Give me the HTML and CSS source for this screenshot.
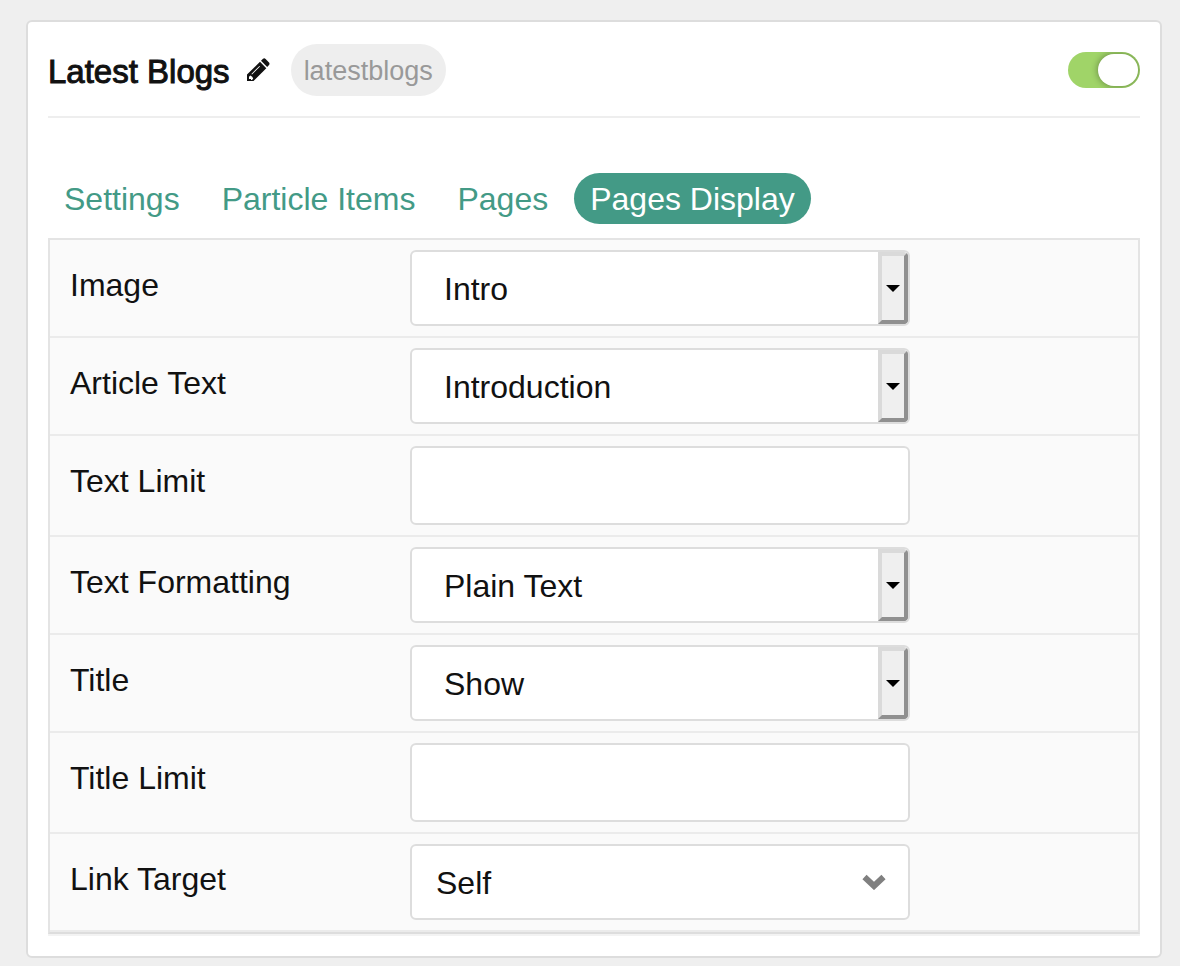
FILE: index.html
```html
<!DOCTYPE html>
<html lang="en">
<head>
<meta charset="utf-8">
<meta name="viewport" content="width=device-width, initial-scale=1">
<title>Latest Blogs</title>
<link rel="stylesheet" href="styles.css">
</head>
<body>
<main class="card">
  <header class="card-header">
    <h1 class="card-title">Latest Blogs</h1>
    <button class="edit" type="button" aria-label="Edit title">
      <svg viewBox="0 0 24 24" width="24" height="24" aria-hidden="true">
        <path fill="#111" fill-rule="evenodd" d="M1 23V16.500L14 3.800 20.300 10.200 7.500 23ZM3 18.800V21H5V22H6L7.200 20.400 6.200 18.800 4.400 17.500ZM6 16.500 14 8.600 13.400 8 5.400 15.900Z"/>
        <path fill="#111" d="M15 2.800 17 .8Q18.300-.2 19.600.9L23 4.400Q24 5.600 23 6.900L21.200 9Z"/>
      </svg>
    </button>
    <span class="badge">latestblogs</span>
    <input class="toggle" type="checkbox" role="switch" aria-label="Enable Latest Blogs" checked>
  </header>

  <nav class="tabs" aria-label="Particle sections">
    <a class="tab" href="#settings">Settings</a>
    <a class="tab" href="#items">Particle Items</a>
    <a class="tab" href="#pages">Pages</a>
    <a class="tab tab-active" href="#display" aria-current="page">Pages Display</a>
  </nav>

  <form class="fields" id="display">
    <div class="row">
      <label class="label" for="image">Image</label>
      <div class="control">
        <select class="select" id="image"><option>Intro</option><option>Full</option><option>None</option></select>
        <span class="stepper" aria-hidden="true"></span>
      </div>
    </div>
    <div class="row">
      <label class="label" for="article">Article Text</label>
      <div class="control">
        <select class="select" id="article"><option>Introduction</option><option>Full Article</option><option>Hide</option></select>
        <span class="stepper" aria-hidden="true"></span>
      </div>
    </div>
    <div class="row">
      <label class="label" for="text-limit">Text Limit</label>
      <input class="control input" id="text-limit" type="text">
    </div>
    <div class="row">
      <label class="label" for="formatting">Text Formatting</label>
      <div class="control">
        <select class="select" id="formatting"><option>Plain Text</option><option>HTML</option></select>
        <span class="stepper" aria-hidden="true"></span>
      </div>
    </div>
    <div class="row">
      <label class="label" for="title">Title</label>
      <div class="control">
        <select class="select" id="title"><option>Show</option><option>Hide</option></select>
        <span class="stepper" aria-hidden="true"></span>
      </div>
    </div>
    <div class="row">
      <label class="label" for="title-limit">Title Limit</label>
      <input class="control input" id="title-limit" type="text">
    </div>
    <div class="row">
      <label class="label" for="target">Link Target</label>
      <div class="control">
        <select class="select select-plain" id="target"><option>Self</option><option>New Window</option></select>
        <svg class="chevron" viewBox="0 0 24 16" width="24" height="16" aria-hidden="true">
          <path d="M2.500 3 12 12 21.500 3" fill="none" stroke="#808080" stroke-width="6"/>
        </svg>
      </div>
    </div>
  </form>
</main>
</body>
</html>
```
FILE: styles.css
```css
* { box-sizing: border-box; }

body {
  margin: 0;
  padding: 20px 18px 7px 26px;
  background: #efefef;
  color: #111;
  font-family: "Liberation Sans", Arial, sans-serif;
  font-size: 32px;
}

.card {
  padding: 22px 20px;
  background: #fff;
  border: 2px solid #ddd;
  border-radius: 6px;
}

.card-header {
  display: flex;
  align-items: center;
  padding-bottom: 20px;
  border-bottom: 2px solid #eee;
}

.card-title {
  margin: 0;
  padding-top: 3px;
  font-size: 33px;
  line-height: 40px;
  font-weight: 400;
  -webkit-text-stroke: 1px currentColor;
}

.edit {
  display: flex;
  margin: 0 21px 0 16px;
  padding: 0;
  border: 0;
  background: none;
}

.badge {
  padding: 2px 13px 0;
  background: #eee;
  border-radius: 26px;
  color: #999;
  font-size: 27px;
  line-height: 50px;
}

.toggle {
  appearance: none;
  width: 72px;
  height: 36px;
  margin: 0 0 0 auto;
  padding: 2px;
  background: #a0d468;
  border-radius: 18px;
  overflow: hidden;
  display: flex;
  justify-content: flex-start;
}

.toggle::before {
  content: "";
  width: 40px;
  height: 32px;
  background: #fff;
  border-radius: 16px;
  box-shadow: 0 0 6px 1px rgba(0, 0, 0, 0.3);
}

.toggle:checked { justify-content: flex-end; }

.tabs {
  display: flex;
  flex-wrap: wrap;
  gap: 10px;
  padding: 55px 0 14px;
}

.tab {
  padding: 1px 16px 0;
  border-radius: 26px;
  color: #439a86;
  line-height: 50px;
  text-decoration: none;
}

.tab-active {
  background: #439a86;
  color: #fff;
}

.fields {
  background: #fafafa;
  border: 2px solid #e4e4e4;
  border-bottom-color: #ddd;
  box-shadow: 0 2px 0 #f3f3f3;
}

.row {
  display: grid;
  grid-template-columns: 340px minmax(0, 500px);
  align-items: start;
  padding: 10px 20px;
  border-bottom: 2px solid #ebebeb;
}

.label { line-height: 70px; }

.control {
  display: grid;
  width: 100%;
  height: 76px;
  background: #fff;
  border: 2px solid #ddd;
  border-radius: 6px;
  overflow: hidden;
}

.input {
  height: 79px;
  padding: 0 32px;
  color: inherit;
  font: inherit;
}

.select {
  appearance: none;
  grid-area: 1 / 1;
  width: 100%;
  margin: 0;
  padding: 2px 44px 0 32px;
  border: 0;
  background: transparent;
  color: inherit;
  font: inherit;
}

.select-plain { padding-left: 24px; }

.stepper {
  grid-area: 1 / 1;
  justify-self: end;
  display: grid;
  place-items: center;
  width: 30px;
  background: #efefef;
  border: 4px solid;
  border-color: #dadada #909090 #909090 #dadada;
  border-radius: 0 4px 4px 0;
  pointer-events: none;
}

.stepper::before {
  content: "";
  border: 7px solid transparent;
  border-top-color: #000;
  border-bottom: 0;
}

.chevron {
  grid-area: 1 / 1;
  place-self: center end;
  margin-right: 22px;
  pointer-events: none;
}
```
